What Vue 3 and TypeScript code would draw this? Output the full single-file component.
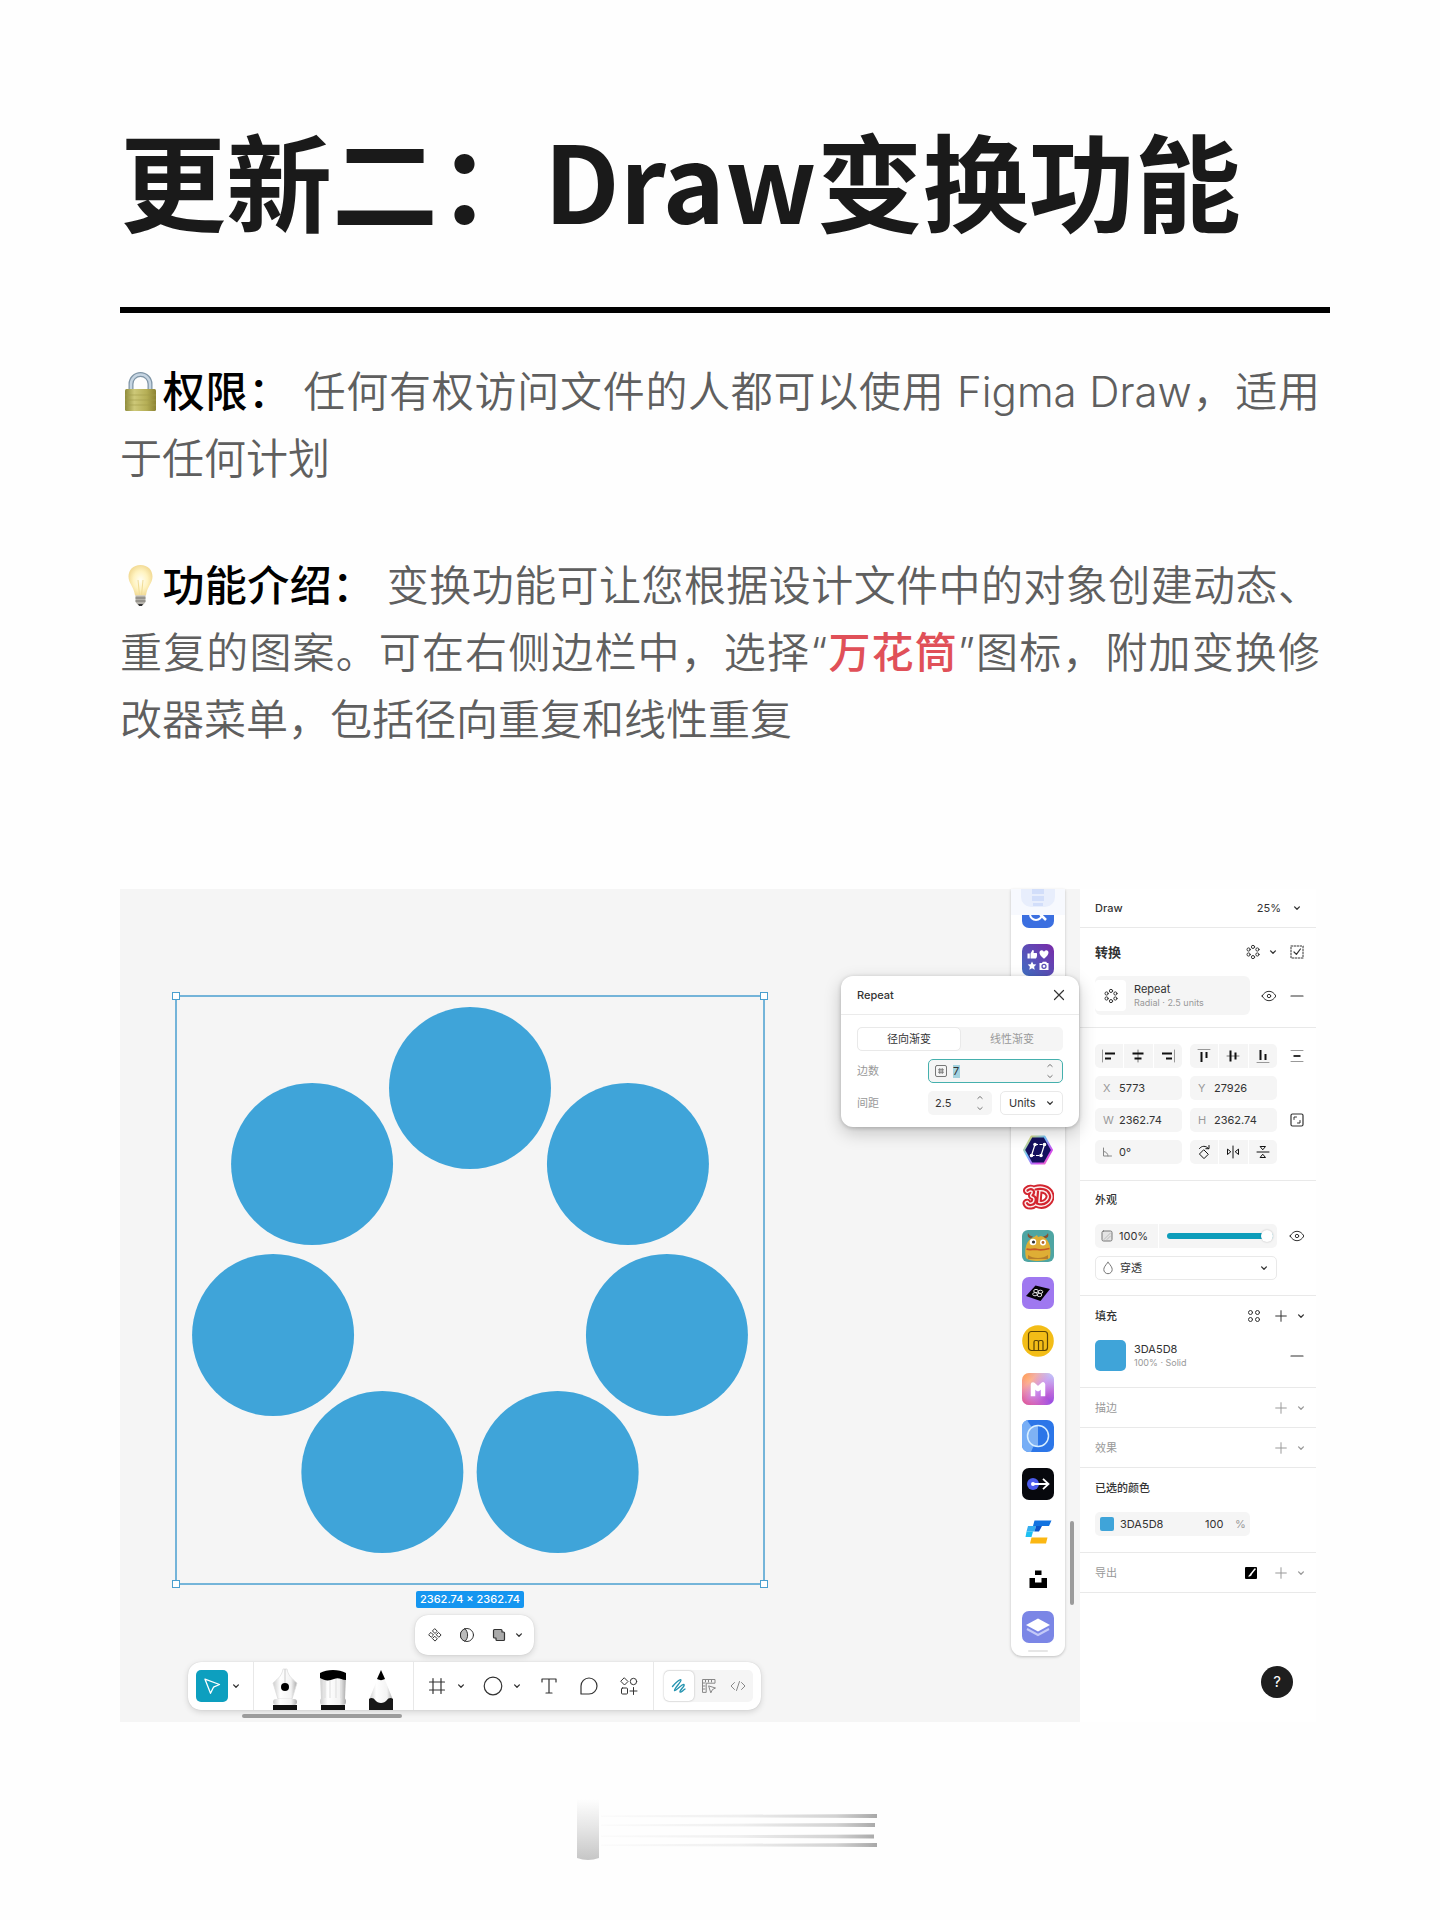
<script setup lang="ts">
import { computed, defineComponent, h, ref } from 'vue'

const glyphs: Record<string, string> = {
  chev: '<path d="M9.6 10.9l2.4 2.4 2.4-2.4" stroke-width="1.3"/>',
  radial: '<circle cx="12" cy="6.9" r="1.6"/><circle cx="16.4" cy="9.5" r="1.6"/><circle cx="16.4" cy="14.5" r="1.6"/><circle cx="12" cy="17.1" r="1.6"/><circle cx="7.6" cy="14.5" r="1.6"/><circle cx="7.6" cy="9.5" r="1.6"/>',
  dashcheck: '<rect x="6" y="6" width="12" height="12" stroke-dasharray="1.6 1.4"/><path d="M9 12l2.4 2.4L15.4 9" stroke-width="1.2"/>',
  eye: '<path d="M5.2 12c1.5-3 4-4.7 6.8-4.7s5.3 1.7 6.8 4.7c-1.5 3-4 4.7-6.8 4.7S6.7 15 5.2 12z"/><circle cx="12" cy="12" r="1.7"/>',
  minus: '<path d="M6 12h12" stroke-width="1.2"/>',
  plus: '<path d="M12 6.7v10.6M6.7 12h10.6"/>',
  close: '<path d="M7.500 7.500l9 9M16.500 7.500l-9 9" stroke-width="1.200"/>',
  alignL: '<path d="M5.500 6v12" stroke="#999"/><path d="M8 9.500h10M8 14.500h6" stroke-width="2" stroke-linecap="butt"/>',
  alignC: '<path d="M12 6v12" stroke="#777"/><path d="M6.500 9.500h11M8.500 14.500h7" stroke-width="2" stroke-linecap="butt"/>',
  alignR: '<path d="M18.500 6v12" stroke="#999"/><path d="M6 9.500h10M10 14.500h6" stroke-width="2" stroke-linecap="butt"/>',
  alignT: '<path d="M6 5.500h12" stroke="#999"/><path d="M9.500 8v10M14.500 8v6" stroke-width="2" stroke-linecap="butt"/>',
  alignM: '<path d="M6 12h12" stroke="#777"/><path d="M9.500 6.500v11M14.500 8.500v7" stroke-width="2" stroke-linecap="butt"/>',
  alignB: '<path d="M6 18.500h12" stroke="#999"/><path d="M9.500 6v10M14.500 10v6" stroke-width="2" stroke-linecap="butt"/>',
  tidy: '<path d="M6 6.500h12M6 17.500h12" stroke="#999"/><path d="M8.500 12h7" stroke-width="2" stroke-linecap="butt"/>',
  ratio: '<rect x="6" y="6" width="12" height="12" rx="1.500" stroke-width="1.200"/><path d="M9 11.500V9h2.500M15 12.500V15h-2.500"/>',
  angle: '<path d="M8.500 8v8h8M8.500 11.500c2.500 0 4.500 2 4.500 4.500" stroke="#888"/>',
  rotate: '<path d="M12 10l4.300 4.300L12 18.600l-4.300-4.300z"/><path d="M7.500 8.500c2-3 6.500-3 9 0M17 5.500v3.200h-3.200"/>',
  flipH: '<path d="M12 6v12"/><path d="M6.500 9.500v5l3-2.500zM17.500 9.500v5l-3-2.500z"/>',
  flipV: '<path d="M6 12h12"/><path d="M9.500 6.500h5L12 9.500zM9.500 17.500h5L12 14.500z"/>',
  opacity: '<rect x="7" y="7" width="10" height="10" rx="1.500" stroke="#777" fill="#e4e4e4"/><path d="M9 15.500l6.500-6.500M12 15.500l3.500-3.500" stroke="#bbb"/>',
  drop: '<path d="M12 6.300c2.700 3 4.200 5.200 4.200 7.200a4.200 4.200 0 0 1-8.400 0c0-2 1.500-4.200 4.200-7.200z" stroke="#777"/>',
  styles: '<circle cx="8.500" cy="8.500" r="2"/><circle cx="15.500" cy="8.500" r="2"/><circle cx="8.500" cy="15.500" r="2"/><circle cx="15.500" cy="15.500" r="2"/>',
  brushBox: '<rect x="6" y="6" width="12" height="12" rx="1" fill="#000" stroke="none"/><path d="M16 8l-4 5" stroke="#fff" stroke-width="1.500"/><path d="M9 15.500l2.500-3 1.300 1c-.5 1.500-2 2.200-3.800 2z" fill="#fff" stroke="none"/>',
  hash: '<rect x="6.500" y="6.500" width="11" height="11" rx="1.500" stroke="#777"/><path d="M10.800 9.500v5M13.200 9.500v5M9.500 10.800h5M9.500 13.200h5" stroke="#777"/>',
  steps: '<path d="M9.800 7.500L12 5.500l2.200 2M9.800 16.500l2.200 2 2.200-2" stroke="#777"/>',
  comp4: '<path d="M12 5.900l2.300 2.300L12 10.500 9.700 8.200zM12 13.500l2.300 2.300-2.300 2.300-2.300-2.300zM8.200 9.700l2.300 2.300-2.300 2.300L5.900 12zM15.800 9.700l2.300 2.300-2.300 2.300-2.300-2.300z"/>',
  mask: '<circle cx="12" cy="12" r="6.500"/><path d="M10 5.800a6.500 6.500 0 0 0 0 12.400c3.500-3 3.500-9.400 0-12.400z" fill="#bbb"/>',
  union: '<path d="M6.500 7.500a1 1 0 0 1 1-1h6.500a1 1 0 0 1 1 1V9h1.500a1 1 0 0 1 1 1v6.500a1 1 0 0 1-1 1H10a1 1 0 0 1-1-1V15H7.500a1 1 0 0 1-1-1z" fill="#aaa" stroke-width="1.200"/>',
  cursor: '<path d="M5 5.200l14.500 5.300-6 2.700-3 6.100z" stroke-width="1.300"/>',
  frame: '<path d="M8 4.500v15M16 4.500v15M4.500 8h15M4.500 16h15" stroke-width="1.200"/>',
  ellipse: '<circle cx="12" cy="12" r="8.800" stroke-width="1.200"/>',
  text: '<path d="M5 8V5h14v3M12 5v14M9 19h6" stroke-width="1.200"/>',
  chat: '<path d="M4 20v-8a8 8 0 1 1 8 8z" stroke-width="1.200"/>',
  actions: '<path d="M7.500 4l3.500 3.500L7.500 11 4 7.500z"/><circle cx="16.500" cy="7.500" r="3.200"/><rect x="4.500" y="14" width="6" height="6" rx="1"/><path d="M16.500 13.500v7M13 17h7"/>',
  squiggle: '<path d="M5.500 12.500C9 8 13 5 14 6s-7.500 9.500-6.500 10.500S15.500 9.500 17 10.500s-5 6.500-4 7.500 2.500-1.500 5-3" stroke="#2494b0" stroke-width="1.400"/>',
  layout: '<path d="M5.500 18V5.500H18v3.700H9.200V18z" stroke="#888"/><path d="M12 12l6.500 2-3 1.500-1.500 3zM8.500 6v2M11.500 6v2M14.500 6v2M6 9h2M6 12h2M6 15h2" stroke="#888"/>',
  code: '<path d="M8.500 8.500L5 12l3.500 3.500M15.500 8.500L19 12l-3.500 3.500M13.500 7.500l-3 9" stroke="#888"/>',
}

const Icon = defineComponent({
  props: { name: { type: String, required: true } },
  setup: (p) => () =>
    h('svg', {
      class: 'icon', width: 24, height: 24, viewBox: '0 0 24 24', fill: 'none',
      stroke: 'currentColor', 'stroke-linecap': 'round', 'stroke-linejoin': 'round',
      'aria-hidden': 'true', innerHTML: glyphs[p.name],
    }),
})

interface Plugin { id: string; art: string }
const plugins: Plugin[] = [
  { id: 'search', art: '<rect width="32" height="32" rx="7" fill="#3b6fe0"/><circle cx="14" cy="18" r="6" fill="none" stroke="#fff" stroke-width="2"/><path d="M18 18l6 6" stroke="#fff" stroke-width="2.500"/>' },
  { id: 'social', art: '<defs><linearGradient id="g1" x1="1" y1="0" x2="0" y2="1"><stop stop-color="#7a2aa8"/><stop offset="1" stop-color="#3f6fc4"/></linearGradient></defs><rect width="32" height="32" rx="7" fill="url(#g1)"/><g fill="#fff"><path d="M5.500 9.500h2.300v5H5.500zM8.500 9.500L10.500 6c1.500-.2 1.600 1 1.100 3h3c.8 0 .6 5-.8 5.500H8.500zM22 14.800c-7-4.800-4.500-9.300-1.500-8.300.9.300 1.500 1.300 1.500 1.300s.6-1 1.500-1.300c3-1 5.500 3.500-1.500 8.300zM10 17.500l1.300 2.800 3 .3-2.200 2.100.6 3-2.700-1.500-2.700 1.500.6-3-2.200-2.100 3-.3zM18 19h2l.8-1.300h3.400L25 19h1.500v7h-9v-7z"/></g><circle cx="22" cy="22.300" r="2" fill="none" stroke="#5b52b8" stroke-width="1.300"/>' },
  { id: 'icons', art: '<rect width="32" height="32" rx="7" fill="#6c7ae0"/>' },
  { id: 'images', art: '<rect width="32" height="32" rx="7" fill="#36b38a"/>' },
  { id: 'charts', art: '<rect width="32" height="32" rx="7" fill="#e28a3c"/>' },
  { id: 'skew', art: '<defs><linearGradient id="g2" x1="0" y1="0" x2="1" y2="1"><stop stop-color="#ffe14d"/><stop offset=".4" stop-color="#6fc3ff"/><stop offset=".75" stop-color="#d14df0"/><stop offset="1" stop-color="#ff7ab0"/></linearGradient></defs><path d="M9.500 2.500h13L30 16l-7.500 13.500h-13L2 16z" fill="url(#g2)" stroke="url(#g2)" stroke-width="2" stroke-linejoin="round"/><path d="M10.200 3.500h11.600L28.800 16l-7 12.500H10.200L3.200 16z" fill="#14105e"/><g stroke="#fff" fill="#fff" stroke-width="1.200"><path d="M13 10.500h10M9.500 21.500h9.500" stroke-dasharray="3 1.500"/><path d="M13 10.500L9.500 21.500M22.500 10.500L19 21.500"/><circle cx="13" cy="10.500" r="1.200"/><circle cx="22.500" cy="10.500" r="1.200"/><circle cx="9.500" cy="21.500" r="1.200"/><circle cx="19" cy="21.500" r="1.200"/></g>' },
  { id: 'three', art: '<g fill="none" stroke-linecap="round" stroke-linejoin="round"><path d="M5.500 8.500c4-3 9 0 5 5 5 1 4 9-1.500 9.500-2 .2-3.500-.6-4-1.800M16 9.500l-1 12c8 3.500 15-4 12.500-9.500C25.500 7 19 6 13.500 7.500" stroke="#d3252f" stroke-width="9"/><path d="M5.500 8.500c4-3 9 0 5 5 5 1 4 9-1.500 9.500-2 .2-3.500-.6-4-1.800M16 9.500l-1 12c8 3.500 15-4 12.500-9.500C25.500 7 19 6 13.500 7.500" stroke="#fbeeee" stroke-width="5"/><path d="M5.500 8.500c4-3 9 0 5 5 5 1 4 9-1.500 9.500-2 .2-3.500-.6-4-1.800M16 9.500l-1 12c8 3.500 15-4 12.500-9.500C25.500 7 19 6 13.500 7.500" stroke="#d3252f" stroke-width="2.200"/></g>' },
  { id: 'monster', art: '<rect width="32" height="32" rx="6" fill="#4ea5a3"/><path d="M6 3c-1 3 0 5 3 5.500l2-2C8 6 7 5 6 3zM26 3c1 3 0 5-3 5.500l-2-2C24 6 25 5 26 3z" fill="#8a5230"/><path d="M4 28c-2-9 0-18 8-21l3-2 1 2 3-1c7 2 11 9 9 22-5 4-20 4-24 0z" fill="#dfae35"/><path d="M6 25c5 4 15 4 20 0v4H6z" fill="#b87f2a"/><circle cx="11" cy="12" r="3.300" fill="#fff"/><circle cx="21" cy="12.500" r="3" fill="#fff"/><circle cx="11.500" cy="12" r="1.600" fill="#333"/><circle cx="21" cy="12.500" r="1.400" fill="#b5652b"/><path d="M4.500 19c4 1.500 7-.5 11 .5s8 0 12-1" stroke="#c65a27" stroke-width="1.800" fill="none"/>' },
  { id: 'pattern', art: '<rect width="32" height="32" rx="7" fill="#9f78f0"/><path d="M13.500 8.500L28 12l-9.500 12L4 19z" fill="#050308"/><g fill="none" stroke="#ddd" stroke-width="1"><ellipse cx="14" cy="14" rx="2.300" ry="1.600"/><ellipse cx="18.500" cy="14.800" rx="2.300" ry="1.600"/><ellipse cx="13" cy="17.200" rx="2.300" ry="1.600"/><ellipse cx="17.500" cy="18" rx="2.300" ry="1.600"/></g>' },
  { id: 'frames', art: '<circle cx="16" cy="16" r="15.800" fill="#f3bd17"/><rect x="6.500" y="6.500" width="19" height="19" rx="3" fill="none" stroke="#5d4505" stroke-width="1.200"/><path d="M12 25.500V17a1.500 1.500 0 0 1 1.500-1.500h1.500a1.500 1.500 0 0 1 1.500 1.500v8.500M16.500 17a1.500 1.500 0 0 1 1.500-1.500h1.500a1.500 1.500 0 0 1 1.500 1.500v8.500" fill="none" stroke="#5d4505" stroke-width="1.200"/>' },
  { id: 'motion', art: '<defs><linearGradient id="g3" x1="0" y1="0" x2="1" y2="1"><stop stop-color="#ff9a4a"/><stop offset=".25" stop-color="#ffb58a"/><stop offset=".5" stop-color="#c996f5"/><stop offset=".75" stop-color="#b556d6"/><stop offset="1" stop-color="#8d4be8"/></linearGradient><linearGradient id="g4" x1="1" y1="0" x2="0" y2="1"><stop stop-color="#b7d7ff" stop-opacity=".9"/><stop offset=".5" stop-color="#e48ad8" stop-opacity="0"/><stop offset="1" stop-color="#e2487c"/></linearGradient></defs><rect width="32" height="32" rx="7" fill="url(#g3)"/><rect width="32" height="32" rx="7" fill="url(#g4)"/><path d="M11 21V11.500l5 4.500 5-4.500V21" fill="none" stroke="#fff" stroke-width="4.500" stroke-linejoin="round" stroke-linecap="square"/>' },
  { id: 'contrast', art: '<rect width="32" height="32" rx="7" fill="#2c76e8"/><path d="M0 7a7 7 0 0 1 5-6.700L16 16 9 32H7a7 7 0 0 1-7-7z" fill="#77aef6"/><path d="M16 5.500a10.500 10.500 0 0 0 0 21z" fill="#7fb2f4"/><circle cx="16" cy="16" r="10.500" fill="none" stroke="#d8efff" stroke-width="1.500"/>' },
  { id: 'proto', art: '<rect width="32" height="32" rx="7" fill="#07080d"/><circle cx="11" cy="16" r="6" fill="#4b5bea"/><circle cx="11" cy="16" r="2" fill="#fff"/><path d="M11 16h15M21 10.800l5.500 5.200-5.500 5.200" fill="none" stroke="#fff" stroke-width="1.800"/>' },
  { id: 'ribbon', art: '<path d="M12.500 4.500h17L27 10H11z" fill="#1272e0"/><path d="M6 10h8l-1.500 5.500H4.500z" fill="#35aef0"/><path d="M14 10h6l-3 5.500h-4.500z" fill="#0c54c8"/><path d="M4.500 15.500h6.500L9.500 21h-6z" fill="#1ec0f2"/><path d="M9.500 21.500h16L24 27.500H8z" fill="#fbb713"/>' },
  { id: 'photos', art: '<path d="M13 7.500h6.500V12H13zM7.500 15h5.500v4.500h6.500V15H25v10H7.500z" fill="#000"/>' },
  { id: 'layers', art: '<rect width="32" height="32" rx="7" fill="#7b86e6"/><path d="M16 7.500l12 6.500-12 6.500L4 14z" fill="#fff"/><path d="M5 18l11 6 11-6" fill="none" stroke="#c4caf8" stroke-width="2"/>' },
]

const sides = ref('7')
const spacing = ref('2.5')
const opacity = ref(100)

const petals = computed(() =>
  Array.from({ length: Number(sides.value) || 0 }, (_, i) => {
    const a = (i * 2 * Math.PI) / (Number(sides.value) || 1)
    return { x: 298 + 202 * Math.sin(a), y: 298 - 202 * Math.cos(a) }
  }),
)
const corners = [[4, 4], [592, 4], [4, 592], [592, 592]]
const alignH = [['alignL', '左对齐'], ['alignC', '水平居中'], ['alignR', '右对齐']]
const alignV = [['alignT', '顶对齐'], ['alignM', '垂直居中'], ['alignB', '底对齐']]
const flips = [['rotate', '旋转'], ['flipH', '水平翻转'], ['flipV', '垂直翻转']]
const fields = [
  [{ k: 'X', v: '5773' }, { k: 'Y', v: '27926' }],
  [{ k: 'W', v: '2362.74' }, { k: 'H', v: '2362.74' }],
]
</script>

<template>
  <main class="page">
    <h1>更新二：Draw变换功能</h1>
    <hr />
    <section class="prose">
      <p>
        <svg class="emoji" viewBox="0 0 42 42" aria-hidden="true">
          <defs><linearGradient id="lockBody"><stop stop-color="#8f8c3c" /><stop offset=".3" stop-color="#cdc878" /><stop offset=".7" stop-color="#b5ae55" /><stop offset="1" stop-color="#8b8233" /></linearGradient></defs>
          <path d="M11 22V13a9.500 9.500 0 0 1 19 0v9" fill="none" stroke="#7f95a6" stroke-width="5" />
          <path d="M11 22V13a9.500 9.500 0 0 1 19 0v9" fill="none" stroke="#c6d5e2" stroke-width="2.500" />
          <rect x="5" y="18" width="31" height="22" rx="1.500" fill="url(#lockBody)" />
          <path d="M5 24h31M5 29h31M5 34h31" stroke="#a39d4c" stroke-width="1" opacity=".6" />
        </svg><b>权限：</b> 任何有权访问文件的人都可以使用 Figma Draw，适用于任何计划
      </p>
      <p>
        <svg class="emoji" viewBox="0 0 42 42" aria-hidden="true">
          <defs><radialGradient id="bulb"><stop stop-color="#fffef4" /><stop offset=".6" stop-color="#fff3c0" /><stop offset="1" stop-color="#f3dc98" /></radialGradient></defs>
          <path d="M20.500 0C13 0 8.500 5 8.500 11.500c0 7 5.500 10 6.500 19h11c1-9 6.500-12 6.500-19C32.500 5 28 0 20.500 0z" fill="url(#bulb)" />
          <path d="M18 15l1.500 15M23 15l-1.500 15" stroke="#f0dc98" stroke-width="1" />
          <path d="M15.500 30.500h10v6.500l-2.500 3h-5l-2.500-3z" fill="#b4b1aa" />
          <path d="M15.500 33h10M15.500 36h10" stroke="#77746e" /><path d="M18 39h5l-1 2h-3z" fill="#333" />
        </svg><b>功能介绍：</b> 变换功能可让您根据设计文件中的对象创建动态、重复的图案。可在右侧边栏中，选择“<em>万花筒</em>”图标，附加变换修改器菜单，包括径向重复和线性重复
      </p>
    </section>

    <section class="editor">
      <div class="canvas">
        <svg class="selection" viewBox="0 0 596 596" aria-hidden="true">
          <circle v-for="(p, i) in petals" :key="i" :cx="p.x" :cy="p.y" r="81" fill="#3fa4d9" />
          <rect x="4" y="4" width="588" height="588" fill="none" stroke="#4a9fcf" stroke-width="1.500" />
          <rect v-for="(c, i) in corners" :key="'c' + i" :x="c[0] - 3.5" :y="c[1] - 3.5" width="7" height="7" fill="#fff" stroke="#4a9fcf" />
        </svg>
        <span class="size">2362.74 × 2362.74</span>

        <div class="mini float">
          <button aria-label="创建组件"><Icon name="comp4" /></button>
          <button aria-label="蒙版"><Icon name="mask" /></button>
          <button aria-label="联集"><Icon name="union" /></button>
          <button class="slim" aria-label="更多"><Icon name="chev" /></button>
        </div>

        <div class="tools float">
          <div class="group first">
            <button class="move" aria-label="移动"><Icon name="cursor" /></button>
            <button class="slim" aria-label="移动工具"><Icon name="chev" /></button>
          </div>
          <div class="group pens">
            <button aria-label="钢笔">
              <svg width="28" height="44" viewBox="0 0 28 44"><defs><linearGradient id="nib"><stop stop-color="#ccc" /><stop offset=".3" stop-color="#fff" /><stop offset=".75" stop-color="#f3f3f3" /><stop offset="1" stop-color="#aaa" /></linearGradient></defs><path d="M12 3h4c1 6 4 9 10 14l-5 16H7L2 17C8 12 11 9 12 3z" fill="url(#nib)" stroke="#ddd" stroke-width=".8" /><path d="M14 3v14" stroke="#ccc" /><circle cx="14" cy="21" r="4" fill="#000" /><rect x="2" y="33" width="24" height="6" rx="3" fill="url(#nib)" /><path d="M2 39h24v5H2z" fill="#111" /></svg>
            </button>
            <button aria-label="画笔">
              <svg width="28" height="44" viewBox="0 0 28 44"><path d="M1 8h26l-1 25H2z" fill="url(#nib)" /><path d="M6 12v20M11 12v20M17 12v20M22 12v20" stroke="#ddd" /><path d="M1 12V7c7-4 19-4 26 0v7c-5 0-7-3-12-1s-9 2-14-1z" fill="#000" /><rect x="1" y="32" width="26" height="7" rx="3" fill="url(#nib)" /><path d="M2 39h24v5H2z" fill="#111" /></svg>
            </button>
            <button aria-label="铅笔">
              <svg width="28" height="44" viewBox="0 0 28 44"><path d="M14 4L2 34v4h24v-4z" fill="url(#nib)" /><path d="M14 4l4 9c-3 1.500-5 1.500-8 0z" fill="#000" /><path d="M2 33c2-2 5-1 6 1 3 4 9 4 12 0 1-2 4-3 6-1v11H2z" fill="#181818" /></svg>
            </button>
          </div>
          <div class="group draw">
            <button aria-label="画框"><Icon name="frame" /></button>
            <button class="slim" aria-label="画框工具"><Icon name="chev" /></button>
            <button class="shape" aria-label="椭圆"><Icon name="ellipse" /></button>
            <button class="slim shapes" aria-label="形状工具"><Icon name="chev" /></button>
            <button class="wide" aria-label="文本"><Icon name="text" /></button>
            <button class="wide" aria-label="评论"><Icon name="chat" /></button>
            <button class="wide" aria-label="操作"><Icon name="actions" /></button>
          </div>
          <div class="group modes">
            <button class="on" aria-label="绘图"><Icon name="squiggle" /></button>
            <button aria-label="设计"><Icon name="layout" /></button>
            <button aria-label="开发"><Icon name="code" /></button>
          </div>
        </div>
        <i class="bar-x"></i>
        <i class="bar-y"></i>

        <nav class="dock" aria-label="插件">
          <button v-for="p in plugins" :key="p.id" :aria-label="p.id">
            <svg width="32" height="32" viewBox="0 0 32 32" v-html="p.art"></svg>
          </button>
          <div class="veil">
            <svg width="34" height="18" viewBox="0 0 34 18" aria-hidden="true"><path d="M0 0h34v8a10 10 0 0 1-10 10H10A10 10 0 0 1 0 8z" fill="#e8eefc" /><path d="M11 0h12v5H11zM11 7h12v5H11zM12 14h10v3H12z" fill="#d2defa" /></svg>
          </div>
        </nav>

        <form class="popup" @submit.prevent>
          <header><span>Repeat</span><button type="button" aria-label="关闭"><Icon name="close" /></button></header>
          <div class="popup-body">
            <div class="tabs">
              <button type="button" class="on">径向渐变</button>
              <button type="button">线性渐变</button>
            </div>
            <div class="prow">
              <label for="sides">边数</label>
              <div class="num focus"><Icon name="hash" /><input id="sides" v-model="sides" /><Icon name="steps" /></div>
            </div>
            <div class="prow">
              <label for="spacing">间距</label>
              <div class="num"><input id="spacing" v-model="spacing" /><Icon name="steps" /></div>
              <div class="pick"><select aria-label="单位"><option>Units</option></select><Icon name="chev" /></div>
            </div>
          </div>
        </form>
      </div>

      <aside class="panel">
        <div class="sec top"><span>Draw</span><span class="zoom">25%</span><button class="ib" aria-label="缩放"><Icon name="chev" /></button></div>

        <div class="sec transform">
          <div class="head">
            <h2 class="big">转换</h2>
            <button class="ib" aria-label="变换"><Icon name="radial" /></button>
            <button class="ib narrow" aria-label="变换选项"><Icon name="chev" /></button>
            <button class="ib last" aria-label="选择"><Icon name="dashcheck" /></button>
          </div>
          <div class="row">
            <button class="card">
              <span class="tile"><Icon name="radial" /></span>
              <span class="two"><span>Repeat</span><small>Radial · 2.5 units</small></span>
            </button>
            <button class="ib eye1" aria-label="显示"><Icon name="eye" /></button>
            <button class="ib" aria-label="移除"><Icon name="minus" /></button>
          </div>
        </div>

        <div class="sec position">
          <div class="row">
            <div class="seg"><button v-for="a in alignH" :key="a[0]" :aria-label="a[1]"><Icon :name="a[0]" /></button></div>
            <div class="seg"><button v-for="a in alignV" :key="a[0]" :aria-label="a[1]"><Icon :name="a[0]" /></button></div>
            <button class="ib end" aria-label="整理"><Icon name="tidy" /></button>
          </div>
          <div v-for="(r, i) in fields" :key="i" class="row">
            <label v-for="f in r" :key="f.k" class="field"><span>{{ f.k }}</span><input :value="f.v" /></label>
            <button v-if="i" class="ib end" aria-label="锁定比例"><Icon name="ratio" /></button>
          </div>
          <div class="row">
            <label class="field ang"><Icon name="angle" /><input value="0°" aria-label="角度" /></label>
            <div class="seg"><button v-for="a in flips" :key="a[0]" :aria-label="a[1]"><Icon :name="a[0]" /></button></div>
          </div>
        </div>

        <div class="sec look">
          <div class="head"><h2>外观</h2></div>
          <div class="row">
            <div class="fade">
              <label class="pct"><Icon name="opacity" /><input :value="opacity + '%'" aria-label="不透明度" /></label>
              <div class="slide"><input v-model.number="opacity" type="range" min="0" max="100" aria-label="不透明度滑块" /></div>
            </div>
            <button class="ib end" aria-label="可见"><Icon name="eye" /></button>
          </div>
          <div class="blend"><Icon name="drop" /><select aria-label="混合模式"><option>穿透</option></select><Icon name="chev" /></div>
        </div>

        <div class="sec fill">
          <div class="head">
            <h2>填充</h2>
            <button class="ib styles" aria-label="样式"><Icon name="styles" /></button>
            <button class="ib" aria-label="添加填充"><Icon name="plus" /></button>
            <button class="ib tail" aria-label="填充选项"><Icon name="chev" /></button>
          </div>
          <div class="row">
            <i class="swatch"></i>
            <span class="two grow"><span>3DA5D8</span><small>100% · Solid</small></span>
            <button class="ib" aria-label="移除填充"><Icon name="minus" /></button>
          </div>
        </div>

        <div v-for="t in ['描边', '效果']" :key="t" class="sec lone">
          <h2>{{ t }}</h2>
          <button class="ib" :aria-label="'添加' + t"><Icon name="plus" /></button>
          <button class="ib tail" :aria-label="t + '选项'"><Icon name="chev" /></button>
        </div>

        <div class="sec colors">
          <div class="head"><h2>已选的颜色</h2></div>
          <div class="color">
            <i></i><input class="hex" value="3DA5D8" aria-label="颜色" /><input class="amt" value="100" aria-label="颜色不透明度" /><span>%</span>
          </div>
        </div>

        <div class="sec lone">
          <h2>导出</h2>
          <button class="ib brush" aria-label="画笔导出"><Icon name="brushBox" /></button>
          <button class="ib" aria-label="添加导出"><Icon name="plus" /></button>
          <button class="ib tail" aria-label="导出选项"><Icon name="chev" /></button>
        </div>

        <button class="help" aria-label="帮助">?</button>
      </aside>
    </section>

    <footer>
      <svg width="302" height="64" viewBox="0 0 302 64" aria-hidden="true">
        <defs>
          <linearGradient id="post" x1="0" y1="0" x2="0" y2="1"><stop stop-color="#fefefe" /><stop offset=".5" stop-color="#e4e4e4" /><stop offset="1" stop-color="#c6c6c6" /></linearGradient>
          <linearGradient id="ray" x1="0" y1="0" x2="1" y2="0"><stop stop-color="#fbfbfb" /><stop offset=".5" stop-color="#efefef" /><stop offset=".85" stop-color="#d2d2d2" /><stop offset="1" stop-color="#a8a8a8" /></linearGradient>
        </defs>
        <path d="M1 0h22v59q-11 4-22 0z" fill="url(#post)" />
        <path d="M25 16.500L301 15v4L25 18zM25 25.500L299 24v4L25 27zM25 36.500L298 35.500v4L25 38zM25 45.500L301 44v4L25 47z" fill="url(#ray)" />
      </svg>
    </footer>
  </main>
</template>

<style>
body { margin: 0; background: #fefefe; }
</style>

<style scoped>
.page { box-sizing: border-box; min-height: 100vh; padding: 98px 110px 40px 120px; font-family: Inter, "Noto Sans CJK SC", sans-serif; color: #1a1a1a; }
.page * { box-sizing: border-box; }
h1 { margin: 0; font: 700 106px/160px "Noto Sans CJK SC", sans-serif; white-space: nowrap; }
hr { margin: 49px 0 0; border: 0; height: 6px; background: #000; }
.prose { padding: 45px 10px 0 0; }
.prose p { margin: 0 0 60px; font-size: 42px; font-weight: 350; line-height: 67px; color: #5f5f5f; text-align: justify; }
.prose b { font-weight: 500; color: #000; }
.prose em { font-style: normal; font-weight: 500; color: #e05058; }
.emoji { width: 42px; height: 42px; vertical-align: -6px; }

button { padding: 0; border: 0; background: none; color: inherit; font: inherit; display: flex; align-items: center; justify-content: center; }
input, select { min-width: 0; padding: 0; border: 0; outline: 0; background: none; color: inherit; font: inherit; appearance: none; }
.icon { flex: none; display: block; }

.editor { display: flex; margin-top: 136px; font-size: 11px; line-height: 16px; color: #333; }
.canvas { position: relative; flex: 1; min-height: 833px; background: #f5f5f5; }
.selection { position: absolute; left: 52px; top: 103px; width: 596px; height: 596px; }
.size { position: absolute; left: 296px; top: 702px; width: 108px; height: 17px; border-radius: 2px; background: #1596f0; color: #fff; font-weight: 500; line-height: 17px; text-align: center; white-space: nowrap; }
.float { position: absolute; display: flex; background: #fff; box-shadow: 0 2px 6px rgba(0,0,0,.14), 0 0 1px rgba(0,0,0,.2); }
.mini { left: 295px; top: 726px; height: 40px; padding: 0 4px; border-radius: 13px; }
.mini button { width: 32px; }
.mini .slim { width: 15px; padding-right: 8px; }
.tools { left: 68px; top: 773px; width: 573px; height: 48px; border-radius: 13px; overflow: hidden; }
.group { display: flex; align-items: center; border-right: 1px solid #e8e8e8; }
.first { width: 66px; padding-left: 8px; }
.move { width: 32px; height: 32px; border-radius: 5px; background: #0d9fbf; color: #fff; }
.slim { width: 16px; }
.pens { width: 160px; justify-content: space-between; padding: 4px 18px 0 17px; }
.draw { width: 240px; padding-left: 7px; }
.draw button { width: 32px; }
.draw .slim { width: 16px; }
.draw .shape { margin-left: 8px; }
.draw .shapes { margin-right: 4px; }
.draw .wide { width: 40px; }
.modes { border: 0; margin: 8px 8px 8px 10px; flex: 1; border-radius: 5px; background: #f5f5f5; }
.modes button { flex: 1; height: 30px; border-radius: 5px; }
.modes .on { background: #fff; box-shadow: 0 0 2px rgba(0,0,0,.3); }
.bar-x, .bar-y { position: absolute; border-radius: 2px; background: #9c9c9c; }
.bar-x { left: 122px; bottom: 4px; width: 160px; height: 4px; }
.bar-y { right: 6px; top: 632px; width: 4px; height: 84px; }

.dock { position: absolute; right: 15px; top: 0; width: 54px; height: 767px; padding: 7px 0 13px; display: flex; flex-direction: column; align-items: center; justify-content: space-between; border-radius: 0 0 11px 11px; background: #fff; box-shadow: 0 1px 3px rgba(0,0,0,.22); }
.dock button { height: 32px; }
.dock::after { content: ""; position: absolute; bottom: 4px; width: 20px; height: 2px; border-radius: 1px; background: #e6e6e6; }
.veil { position: absolute; top: 0; left: 0; width: 54px; height: 26px; display: flex; justify-content: center; background: #f7f9fe; }

.popup { position: absolute; right: 1px; top: 87px; width: 238px; height: 151px; border-radius: 12px; background: #fff; box-shadow: 0 6px 18px rgba(0,0,0,.2), 0 1px 4px rgba(0,0,0,.2); z-index: 2; }
.popup header { display: flex; align-items: center; justify-content: space-between; height: 39px; padding: 0 8px 0 16px; border-bottom: 1px solid #ebebeb; font-weight: 500; }
.popup-body { display: flex; flex-direction: column; gap: 8px; padding: 12px 16px 0; }
.tabs { display: flex; height: 24px; border-radius: 5px; background: #f5f5f5; color: #999; }
.tabs button { flex: 1; border-radius: 5px; }
.tabs .on { border: 1px solid #e9e9e9; background: #fff; color: #333; }
.prow { display: flex; gap: 8px; height: 24px; align-items: center; color: #333; }
.prow label { width: 63px; color: #999; }
.num { display: flex; align-items: center; width: 64px; height: 24px; padding-left: 7px; border-radius: 5px; background: #f5f5f5; }
.num input { flex: 1; }
.num.focus { flex: 1; padding-left: 0; border: 1px solid #45b0ad; }
.focus input { background: linear-gradient(#a4d3df, #a4d3df) 0 50% / 7px 13px no-repeat; }
.pick { position: relative; flex: 1; height: 24px; border: 1px solid #e9e9e9; border-radius: 5px; }
.pick select { width: 100%; height: 22px; padding-left: 8px; }
.pick .icon { position: absolute; right: 0; top: -1px; pointer-events: none; }

.panel { position: relative; width: 236px; margin-right: 14px; background: #fff; }
.sec { padding: 0 7px 0 15px; border-bottom: 1px solid #e9e9e9; }
.top { display: flex; align-items: center; height: 39px; font-weight: 500; }
.zoom { margin-left: auto; margin-right: 4px; font-weight: 400; }
.ib { width: 24px; height: 24px; flex: none; }
h2 { flex: 1; margin: 0; font-size: 11px; line-height: 16px; font-weight: 500; }
.big { font-size: 13px; font-weight: 700; }
.head { display: flex; align-items: center; height: 24px; margin-bottom: 12px; }
.narrow { width: 16px; }
.last { margin-left: 4px; }
.row { display: flex; align-items: center; height: 24px; }
.transform { padding-top: 12px; padding-bottom: 12px; }
.transform .row { height: 39px; }
.card { width: 155px; height: 39px; justify-content: flex-start; border-radius: 6px; background: #f5f5f5; text-align: left; }
.tile { display: flex; align-items: center; justify-content: center; width: 31px; height: 31px; margin-right: 8px; border-radius: 4px; background: #fff; }
.two { display: flex; flex-direction: column; line-height: 14px; }
.two small { font-size: 9px; color: #999; }
.grow { flex: 1; }
.eye1 { margin-left: 7px; margin-right: 4px; }
.position { display: flex; flex-direction: column; gap: 8px; padding-top: 16px; padding-bottom: 16px; }
.position .row { gap: 8px; }
.seg { display: flex; gap: 1px; width: 87px; height: 24px; border-radius: 5px; overflow: hidden; }
.seg button { flex: 1; background: #f5f5f5; color: #111; }
.end { margin-left: auto; }
.field { display: flex; align-items: center; width: 87px; height: 24px; padding-left: 8px; border-radius: 5px; background: #f5f5f5; }
.field span { width: 16px; color: #999; }
.field input { flex: 1; }
.ang { padding-left: 0; }
.look { padding-top: 7px; padding-bottom: 15px; }
.fade { display: flex; gap: 1px; width: 182px; height: 24px; border-radius: 5px; overflow: hidden; }
.pct { display: flex; align-items: center; width: 63px; background: #f5f5f5; }
.pct input { width: 36px; }
.slide { flex: 1; display: flex; align-items: center; padding: 0 4px 0 8px; background: #f5f5f5; }
.slide input { width: 100%; height: 12px; margin: 0; }
.slide input::-webkit-slider-runnable-track { height: 6px; border-radius: 3px; background: #0d9dba; }
.slide input::-webkit-slider-thumb { appearance: none; width: 12px; height: 12px; margin-top: -3px; border-radius: 50%; background: #fff; box-shadow: 0 0 2px rgba(0,0,0,.25); }
.blend { display: flex; align-items: center; width: 182px; height: 24px; margin-top: 8px; border: 1px solid #e9e9e9; border-radius: 5px; }
.blend select { flex: 1; height: 22px; }
.fill { padding-top: 8px; padding-bottom: 16px; }
.fill .row { height: 31px; }
.styles { margin-right: 3px; }
.tail { width: 16px; }
.swatch { width: 31px; height: 31px; margin-right: 8px; border-radius: 5px; background: #3fa4d9; }
.lone { display: flex; align-items: center; height: 40px; color: #999; }
.lone h2 { font-weight: 400; }
.brush { margin-right: 6px; color: #000; }
.colors { padding-top: 8px; padding-bottom: 16px; }
.color { display: flex; align-items: center; width: 155px; height: 24px; padding-left: 5px; border-radius: 5px; background: #f5f5f5; }
.color i { width: 14px; height: 14px; margin-right: 6px; border-radius: 2px; background: #3fa4d9; }
.color .hex { width: 78px; height: 24px; }
.color .amt { width: 24px; height: 24px; margin-left: 7px; }
.color span { margin-left: 6px; color: #999; }
.help { position: absolute; right: 23px; bottom: 24px; width: 32px; height: 32px; border-radius: 50%; background: #1e1e1e; color: #fff; font-size: 15px; }

footer { display: flex; justify-content: center; padding: 77px 0 0 4px; }
</style>
